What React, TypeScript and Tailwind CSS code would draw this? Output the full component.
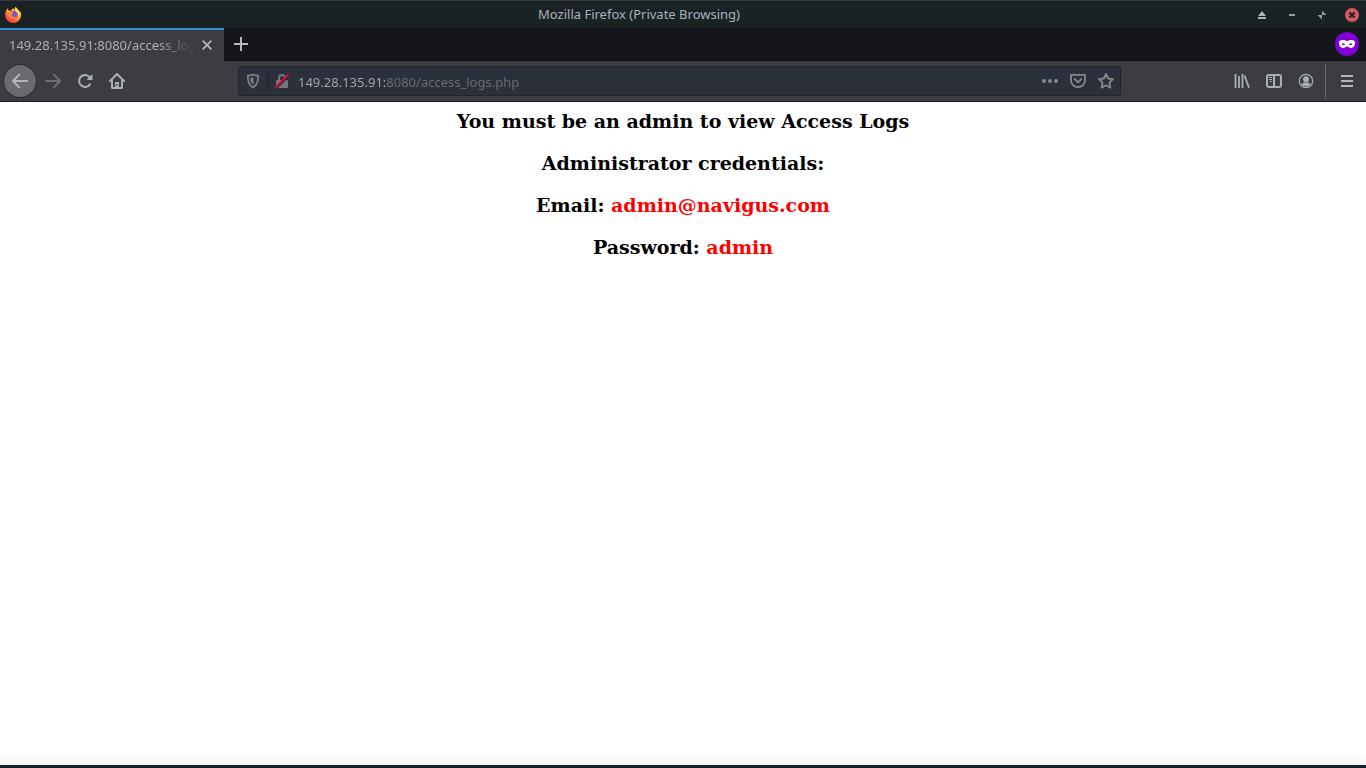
import React from "react";

const iconButton =
  "flex h-8 w-8 shrink-0 items-center justify-center text-[#a9b0b3]";

function FirefoxLogo() {
  return (
    <svg width="18" height="18" viewBox="0 0 18 18" aria-hidden="true">
      <defs>
        <linearGradient id="flame" x1="0.85" y1="0.1" x2="0.25" y2="1">
          <stop offset="0" stopColor="#fff04a" />
          <stop offset="0.35" stopColor="#ffb52b" />
          <stop offset="0.65" stopColor="#ff6a35" />
          <stop offset="1" stopColor="#f5295f" />
        </linearGradient>
      </defs>
      <path
        fill="url(#flame)"
        d="M3.700 2.200c0 1 .3 1.700.8 2.300.9-.2 1.800-.1 2.600.2C7.900 3.300 8.900 2.500 9.900 2.200c-.2 1 .1 1.700.7 2.300C10.600 3 10.900 1.600 11.700.8c.6 1.600 3 2.700 3.800 5 .3-.2.300-.6.300-1 1 1.600 1.400 3.200 1.200 5-.4 4.200-3.700 7.200-7.800 7.200-4.400 0-8-3.400-8-7.900 0-2.800 1-5.300 2.500-6.900Z"
      />
      <circle cx="9.800" cy="8.600" r="3.800" fill="#8250d8" />
      <path
        fill="#ff8b2c"
        d="M2.800 5.400c1.600-1 3.600-.9 4.700.4.700.3 1.700.3 2.100.8-.3 1-1.500 1.200-2 1.900-.5 1.100.4 2.300 1.700 2.400 1 .1 1.500-.6 2.400-.2-.7 1.500-2.300 2.300-4.100 1.900C4.700 11.900 3 9 2.800 5.400Z"
      />
      <path fill="#ffdc3e" d="M11.700.8c.6 1.600 3.200 3 3.500 5.600.3 2-.2 3.400-1.200 4.500.4-2.300-.3-4-1.700-5.100-1-.9-1.300-3.200-.6-5Z" />
    </svg>
  );
}

function TitleBar() {
  return (
    <header className="flex h-7 items-center border-t border-[#2f3a3c] bg-[#1b2224]">
      <div className="w-6 shrink-0 pl-1">
        <FirefoxLogo />
      </div>
      <h1 className="flex-1 pb-0.5 text-center font-['Noto_Sans',sans-serif] text-[13px] leading-5 whitespace-nowrap text-[#a9b1bd]">
        Mozilla Firefox (Private Browsing)
      </h1>
      <div className="flex w-28 shrink-0 items-center justify-between pr-1.5">
        <button aria-label="Keep above" className="flex h-4 w-4 items-center justify-center text-[#a8b8b4]">
          <svg width="10" height="10" viewBox="0 0 10 10" fill="currentColor">
            <path d="M5 1 9 6H1ZM1 7h8v2H1Z" />
          </svg>
        </button>
        <button aria-label="Minimize" className="flex h-4 w-4 items-center justify-center text-[#969ea0]">
          <svg width="6" height="10" viewBox="0 0 6 10" fill="currentColor">
            <path d="M0 4h6v2H0Z" />
          </svg>
        </button>
        <button aria-label="Restore" className="flex h-4 w-4 items-center justify-center text-[#969ea0]">
          <svg width="10" height="10" viewBox="0 0 10 10" fill="currentColor">
            <path d="M5 .5v4.500h4.500ZM.5 5H5v4.500Z" />
          </svg>
        </button>
        <button aria-label="Close" className="flex h-4 w-4 items-center justify-center">
          <svg width="14" height="14" viewBox="0 0 14 14">
            <circle cx="7" cy="7" r="7" fill="#d15a61" />
            <path d="m4.500 4.500 5 5m0-5-5 5" stroke="#242226" strokeWidth="2" />
          </svg>
        </button>
      </div>
    </header>
  );
}

function TabStrip() {
  return (
    <div className="flex h-[33px] items-center border-b border-[#0c0c0f] bg-[#15161b]">
      <div className="flex h-[33px] w-56 shrink-0 items-center self-start border-t-2 border-[#2f8fd3] bg-[#3c3c41] pr-2 pl-[9px]">
        <span className="w-[186px] overflow-hidden mask-r-from-80% pb-0.5 font-['Noto_Sans',sans-serif] text-[13px] leading-5 whitespace-nowrap text-[#abb0b3]">
          149.28.135.91:8080/access_logs.php
        </span>
        <button aria-label="Close tab" className="ml-1 flex h-4 w-4 items-center justify-center pb-0.5 text-[#b4b9bc]">
          <svg width="10" height="10" viewBox="0 0 10 10" fill="none" stroke="currentColor" strokeWidth="1.800">
            <path d="m.7.7 8.600 8.600m0-8.600L.7 9.300" />
          </svg>
        </button>
      </div>
      <button aria-label="New tab" className="ml-px flex h-8 w-8 items-center justify-center text-[#b4b9bc]">
        <svg width="14" height="14" viewBox="0 0 14 14" fill="none" stroke="currentColor" strokeWidth="2">
          <path d="M7 0v14M0 7h14" />
        </svg>
      </button>
      <span role="img" aria-label="Private window" className="mr-[7px] ml-auto">
        <svg width="24" height="24" viewBox="0 0 24 24">
          <circle cx="12" cy="12" r="12" fill="#8000d7" />
          <path
            fill="#fff"
            fillRule="evenodd"
            d="M4 9.800C5.200 7.400 9 7.400 12 9c3-1.600 6.800-1.600 8 .8.300 3.600-1.500 6.200-4 6.200-2 0-2.700-1.600-4-1.600S10 16 8 16c-2.500 0-4.300-2.600-4-6.200Zm2.500 2.400c1.300 1.200 2.500 1.200 3.600 0-1.100-1.200-2.300-1.200-3.600 0Zm7.400 0c1.100 1.200 2.300 1.200 3.600 0-1.300-1.200-2.500-1.200-3.600 0Z"
          />
        </svg>
      </span>
    </div>
  );
}

function AddressBar() {
  return (
    <div className="flex h-[30px] min-w-0 flex-1 items-center rounded-[3px] border border-[#22242b] bg-[#2c303a]">
      <button aria-label="Tracking protection" className="flex h-7 w-7 shrink-0 items-center justify-center text-[#7d8187]">
        <svg width="16" height="16" viewBox="0 0 16 16" fill="none" stroke="currentColor" strokeWidth="1.800">
          <path d="M8 1.500c1.600.8 3.300 1.200 5.200 1.200.1 5.600-1 9.600-5.200 11.800C3.800 12.300 2.700 8.300 2.800 2.700 4.700 2.700 6.400 2.300 8 1.500Z" strokeLinejoin="round" />
          <path d="M8.500 4.200v7.600C6 10.400 5.300 8 5.300 5c1.200-.1 2.200-.3 3.200-.8Z" fill="currentColor" stroke="none" />
        </svg>
      </button>
      <span className="h-5 w-px shrink-0 bg-[#1e2128]" />
      <button aria-label="Connection not secure" className="flex h-7 w-7 shrink-0 items-center justify-center text-[#73777c]">
        <svg width="16" height="16" viewBox="0 0 16 16" fill="none">
          <path d="M5 8V5a3 3 0 0 1 6 0v3" stroke="currentColor" strokeWidth="2" />
          <rect x="2" y="7" width="12" height="8" rx="1" fill="currentColor" />
          <path d="m2 15.600 14-14" stroke="#2c303a" strokeWidth="2" />
          <path d="M1 14.600 14.800.8" stroke="#f5003f" strokeWidth="1.700" />
        </svg>
      </button>
      <input
        aria-label="Address"
        defaultValue="149.28.135.91:8080/access_logs.php"
        className="ml-0.5 h-7 min-w-0 flex-1 bg-linear-to-r from-[#a6a9ac] from-[87px] to-[#696d74] to-[87px] bg-clip-text pt-0.5 font-['Noto_Sans',sans-serif] text-[13px] leading-5 text-transparent outline-none"
      />
      <div className="flex shrink-0 items-center gap-3 pr-1.5 text-[#85898f]">
        <button aria-label="Page actions">
          <svg width="16" height="16" viewBox="0 0 16 16" fill="currentColor">
            <circle cx="2" cy="8" r="2" />
            <circle cx="8" cy="8" r="2" />
            <circle cx="14" cy="8" r="2" />
          </svg>
        </button>
        <button aria-label="Save to Pocket">
          <svg width="16" height="16" viewBox="0 0 16 16" fill="none" stroke="currentColor" strokeWidth="1.800" strokeLinecap="round" strokeLinejoin="round">
            <path d="M1 1.800h14v5.400a7 7 0 0 1-14 0Z" />
            <path d="m4.600 6 3.400 3.300L11.400 6" />
          </svg>
        </button>
        <button aria-label="Bookmark this page">
          <svg width="16" height="16" viewBox="0 0 16 16" fill="none" stroke="currentColor" strokeWidth="1.800" strokeLinejoin="round">
            <path d="m8 1 2.100 4.500 4.900.7-3.500 3.500.8 4.900L8 12.300l-4.300 2.300.8-4.900L1 6.200l4.900-.7Z" />
          </svg>
        </button>
      </div>
    </div>
  );
}

function NavBar() {
  return (
    <nav aria-label="Navigation" className="flex h-[41px] items-center border-b border-[#1b1b1f] bg-[#3c3c41] pr-[3px] pl-1">
      <button aria-label="Back" className="mr-px flex h-8 w-8 shrink-0 items-center justify-center rounded-full bg-[#6a6b70] text-[#b1b8bb] ring-1 ring-[#2a2a2e]">
        <svg width="16" height="16" viewBox="0 0 16 16" fill="none" stroke="currentColor" strokeWidth="2" strokeLinecap="round" strokeLinejoin="round">
          <path d="M15 8H1m6.200-6.400L1 8l6.200 6.400" />
        </svg>
      </button>
      <button aria-label="Forward" disabled className="flex h-8 w-8 shrink-0 items-center justify-center text-[#6d7074]">
        <svg width="16" height="16" viewBox="0 0 16 16" fill="none" stroke="currentColor" strokeWidth="2" strokeLinecap="round" strokeLinejoin="round">
          <path d="M1 8h14M8.800 1.600 15 8l-6.200 6.400" />
        </svg>
      </button>
      <button aria-label="Reload" className={iconButton}>
        <svg width="16" height="16" viewBox="0 0 16 16" fill="none" stroke="currentColor" strokeWidth="2" strokeLinecap="round">
          <path d="M13 11.400A6 6 0 1 1 12.600 4" />
          <path d="M15.500 1v6H9.500Z" fill="currentColor" stroke="none" />
        </svg>
      </button>
      <button aria-label="Home" className={iconButton}>
        <svg width="16" height="16" viewBox="0 0 16 16" fill="none" stroke="currentColor" strokeWidth="2" strokeLinecap="round" strokeLinejoin="round">
          <path d="m1 8 7-7 7 7M3 7.500V15h10V7.500" />
          <path d="M6 15V9h4v6Z" fill="currentColor" stroke="none" />
          <path d="M8 11v2" stroke="#3c3c41" strokeWidth="1" strokeLinecap="butt" />
        </svg>
      </button>
      <div className="flex min-w-0 flex-1 px-[105px]">
        <AddressBar />
      </div>
      <button aria-label="Library" className={iconButton}>
        <svg width="16" height="16" viewBox="0 0 16 16" fill="none" stroke="currentColor" strokeWidth="1.800">
          <path d="M1.500 1v14M5 3v12M8.500 1v14M10.500 2.500 15 14.700" />
        </svg>
      </button>
      <button aria-label="Sidebars" className={iconButton}>
        <svg width="16" height="16" viewBox="0 0 16 16" fill="none" stroke="currentColor">
          <rect x="1" y="2" width="14" height="12" rx="2" strokeWidth="2" />
          <path d="M8 2v12" strokeWidth="2" />
          <path d="M3 4.500h3M3 6.500h3M4 8.500h2" />
        </svg>
      </button>
      <button aria-label="Account" className={iconButton}>
        <svg width="16" height="16" viewBox="0 0 16 16">
          <circle cx="8" cy="8" r="6.700" fill="none" stroke="currentColor" strokeWidth="1.200" />
          <circle cx="8" cy="6.300" r="3" fill="currentColor" />
          <path d="M3.200 11c1.500-.9 2.300-1.500 3-1.500h3.600c.7 0 1.500.6 3 1.500-1 1.700-2.800 2.500-4.800 2.500S4.200 12.700 3.200 11Z" fill="currentColor" />
        </svg>
      </button>
      <span className="ml-[3px] h-[34px] w-px shrink-0 bg-[#66686d]" />
      <button aria-label="Menu" className="ml-[5px] flex h-8 w-8 shrink-0 items-center justify-center text-[#b1b8bb]">
        <svg width="12" height="12" viewBox="0 0 12 12" fill="currentColor">
          <path d="M0 0h12v2H0ZM0 5h12v2H0ZM0 10h12v2H0Z" />
        </svg>
      </button>
    </nav>
  );
}

export default function App() {
  return (
    <div className="flex min-h-screen flex-col bg-white">
      <TitleBar />
      <TabStrip />
      <NavBar />
      <main className="flex flex-1 flex-col gap-5 bg-linear-to-t from-[#f5f5f5] to-white to-[12px] pt-2 text-center font-['DejaVu_Serif',serif] text-[19px] leading-[22px] font-bold text-black">
        <h3>You must be an admin to view Access Logs</h3>
        <h3>Administrator credentials:</h3>
        <h3>
          Email: <span className="text-[#ff0000]">admin@navigus.com</span>
        </h3>
        <h3>
          Password: <span className="text-[#ff0000]">admin</span>
        </h3>
      </main>
      <footer className="h-[3px] bg-[#1b222c]" />
    </div>
  );
}
